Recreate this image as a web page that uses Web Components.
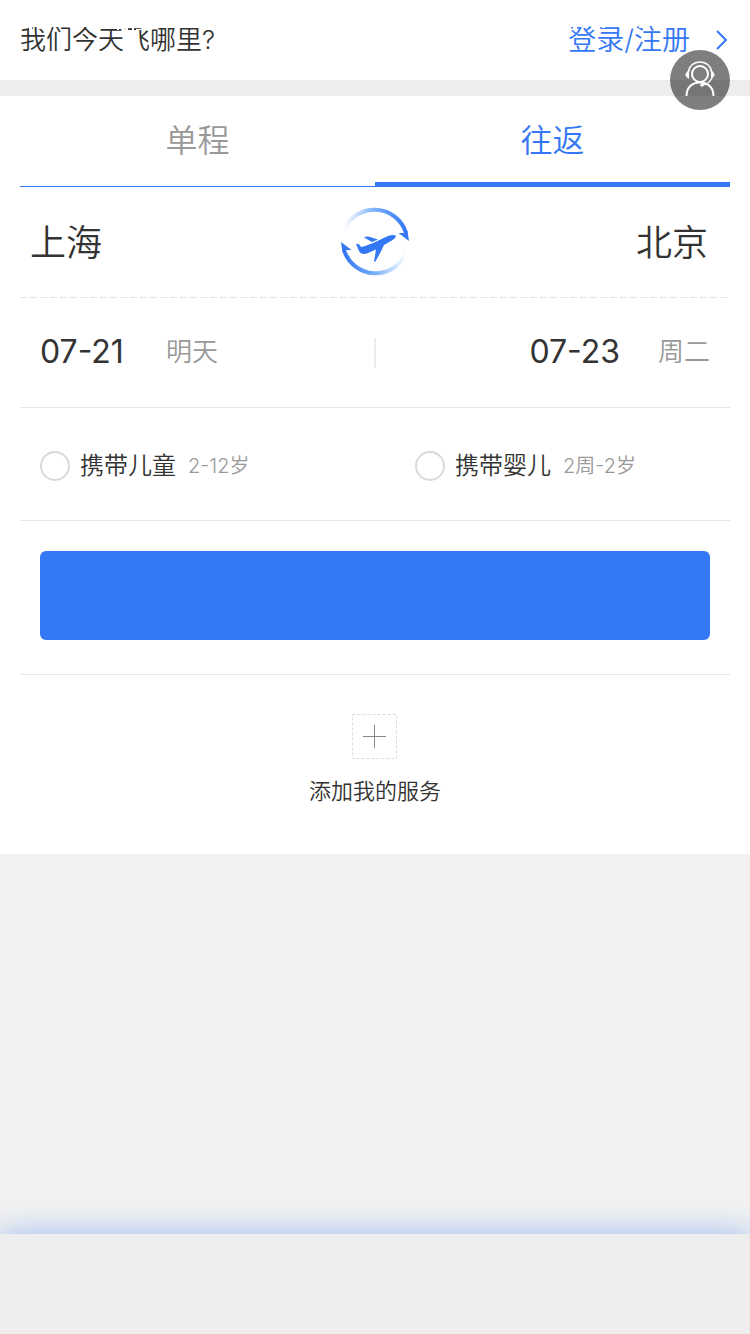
<!DOCTYPE html>
<html lang="zh-CN">
<head>
<meta charset="utf-8">
<meta name="viewport" content="width=device-width, initial-scale=1">
<title>机票预订</title>
<style>
  html, body {
    height: 100%;
  }
  body {
    margin: 0;
    font-family: Inter, "Noto Sans CJK SC", sans-serif;
    font-weight: 350;
    color: #333;
    background: #f1f1f1;
    --blue: #3478f6;
    --line: #e6e6e6;
    --grey: #999;
  }
</style>
</head>
<body>
<flight-app>
  <welcome-bar slot="top" title-text="我们今天飞哪里?" link-text="登录/注册"></welcome-bar>
  <trip-tabs tabs="单程,往返" selected="1"></trip-tabs>
  <city-row from="上海" to="北京"></city-row>
  <date-row>
    <trip-date date="07-21" day="明天"></trip-date>
    <trip-date date="07-23" day="周二"></trip-date>
  </date-row>
  <passenger-row>
    <check-option hint="2-12岁">携带儿童</check-option>
    <check-option hint="2周-2岁">携带婴儿</check-option>
  </passenger-row>
  <search-action></search-action>
  <add-service>添加我的服务</add-service>
</flight-app>

<script>
// small helper, every element here gets an open shadow root filled with markup
class BaseElement extends HTMLElement {
  constructor() {
    super()
    this.attachShadow({ mode: "open" })
  }
  connectedCallback() {
    this.shadowRoot.innerHTML = `<style>
      :host { display: block; }
      button { font: inherit; color: inherit; background: none; border: 0; padding: 0; margin: 0; cursor: pointer; }
      svg { display: block; }
    </style>${this.render()}`
  }
}

// page frame: top slot, white card, empty area and the bottom bar
class FlightApp extends BaseElement {
  render() {
    return `
    <style>
      :host { display: flex; flex-direction: column; min-height: 100%; }
      main { background: #fff; padding: 0 20px; }
      .rest { flex: 1; overflow: hidden; display: flex; flex-direction: column; justify-content: flex-end; }
      footer { height: 100px; background: #eee; box-shadow: 0 0 28px rgba(52, 124, 246, 0.46); }
    </style>
    <slot name="top"></slot>
    <main><slot></slot></main>
    <div class="rest"><footer></footer></div>`
  }
}

class WelcomeBar extends BaseElement {
  render() {
    return `
    <style>
      :host { position: relative; border-bottom: 16px solid #ededed; }
      header { display: flex; align-items: center; justify-content: space-between; height: 80px; padding: 0 20px; background: #fff; }
      h1 { margin: 0; font-size: 26px; line-height: 40px; font-weight: inherit; }
      a { display: flex; align-items: center; gap: 26px; padding-right: 2px; font-size: 28px; line-height: 40px; color: var(--blue); text-decoration: none; }
      .status { position: absolute; top: 0; left: 0; width: 100%; height: 30px; display: flex; justify-content: space-between; pointer-events: none; }
      button { position: absolute; right: 20px; top: 50px; width: 60px; height: 60px; border-radius: 50%; background: rgba(0, 0, 0, 0.5); }
    </style>
    <header>
      <h1>${this.getAttribute("title-text")}</h1>
      <a href="#login">${this.getAttribute("link-text")}
        <svg width="12" height="20" viewBox="0 0 12 20" fill="none" stroke="currentColor" stroke-width="2"><path d="M1 1l9 9-9 9"/></svg>
      </a>
    </header>
    <!-- white status area lies over the top edge of the texts -->
    <div class="status" aria-hidden="true">
      <svg width="220" height="30" viewBox="0 0 220 30" fill="#fff">
        <path d="M0 0H220V27H0Z"/>
        <path d="M29 26h3v4h-3zM37 26h4v3h-4zM108 26h3v3h-3zM117 26h2v4h-2zM126 26h2v4h-2zM132 26h2v4h-2zM136 29h5v1h-5z"/>
      </svg>
      <svg width="220" height="30" viewBox="0 0 220 30" fill="#fff">
        <path d="M0 0H220V26H0Z"/>
        <path d="M43 25h4v4h-4zM53 25h2v3h-2zM72 25h3v3h-3zM109 25h3v3h-3zM122 25h2v3h-2z"/>
      </svg>
    </div>
    <button aria-label="客服">
      <svg width="60" height="60" viewBox="0 0 60 60" fill="none" stroke="#fff">
        <circle cx="30" cy="24" r="8" stroke-width="2"/>
        <path d="M18.500 22a11.500 10 0 0 1 23 0M42 28c-2 4-5 6.500-10 7" stroke-width="1.400"/>
        <path d="M19 20q-7 4.500 0 9zM41 20q7 4.500 0 9z" fill="#fff" stroke="none"/>
        <circle cx="32" cy="35" r="1.800" fill="#fff" stroke="none"/>
        <path d="M16.500 46c0-8 5-13.500 13.500-13.500s13.500 5.500 13.500 13.500" stroke-width="2"/>
      </svg>
    </button>`
  }
}

class TripTabs extends BaseElement {
  render() {
    const selected = Number(this.getAttribute("selected"))
    const tabs = this.getAttribute("tabs").split(",")
    return `
    <style>
      nav { display: flex; align-items: flex-end; }
      button { flex: 1; height: 91px; box-sizing: border-box; padding-bottom: 4px; font-size: 32px; line-height: 48px; color: var(--grey); border-bottom: 1px solid var(--blue); }
      button[aria-selected="true"] { padding-bottom: 0; color: var(--blue); border-bottom-width: 5px; }
      span { display: block; padding-top: 4px; }
    </style>
    <nav role="tablist">
      ${tabs.map((tab, i) => `<button role="tab" aria-selected="${i === selected}"><span>${tab}</span></button>`).join("")}
    </nav>`
  }
}

class CityRow extends BaseElement {
  render() {
    return `
    <style>
      .row { display: grid; grid-template-columns: 1fr auto 1fr; align-items: center; height: 110px; }
      .city { justify-self: start; padding: 2px 10px 0; font-size: 36px; line-height: 54px; }
      .to { justify-self: end; padding-right: 22px; }
      .dash { height: 1px; background: repeating-linear-gradient(90deg, #e2e2e2 0 7px, transparent 7px 10px); }
    </style>
    <div class="row">
      <button class="city">${this.getAttribute("from")}</button>
      <button aria-label="交换城市">
        <svg width="72" height="72" viewBox="0 0 72 72">
          <defs>
            <linearGradient id="fade" x1="0" x2="1" y1="0" y2="0"><stop offset="0" stop-color="#fff"/><stop offset=".5" stop-color="#78b0fb"/><stop offset="1" stop-color="#3478f6"/></linearGradient>
            <g id="arrow">
              <path d="M5 24A33 33 0 0 1 67 27" fill="none" stroke="url(#fade)" stroke-width="4"/>
              <path d="M70 35L59.500 27L65 27L68.500 25Z" fill="#3478f6"/>
            </g>
          </defs>
          <use href="#arrow"/>
          <use href="#arrow" transform="rotate(180 36 35.500)"/>
          <path d="M17 38Q20 37 22 41L26 40L34 37L49 30Q55 28 57 30Q57 32 52 35L45 39Q41 48 36 56L35 55.500L37 43.500L28 47.500Q22 49 20 45Z" fill="#3478f6"/>
          <path d="M25 31.500Q28 30 31 31L39 33.500L33 36Z" fill="#3478f6"/>
        </svg>
      </button>
      <button class="city to">${this.getAttribute("to")}</button>
    </div>
    <div class="dash"></div>`
  }
}

class DateRow extends BaseElement {
  render() {
    return `
    <style>
      .row { display: flex; align-items: center; justify-content: space-between; height: 109px; padding: 0 20px; border-bottom: 1px solid var(--line); }
      .split { width: 2px; height: 30px; background: #ececec; }
      .half { flex: 1; display: flex; }
      .end { justify-content: flex-end; }
    </style>
    <div class="row">
      <div class="half"><slot name="start"></slot></div>
      <div class="split"></div>
      <div class="half end"><slot name="end"></slot></div>
    </div>`
  }
  connectedCallback() {
    super.connectedCallback()
    // first date goes left of the divider, second one right
    const dates = this.querySelectorAll("trip-date")
    dates[0].slot = "start"
    dates[1].slot = "end"
  }
}

class TripDate extends BaseElement {
  render() {
    return `
    <style>
      button { display: flex; align-items: center; gap: 38px; padding-bottom: 2px; line-height: 48px; }
      .date { min-width: 88px; text-align: left; font-size: 32px; font-weight: 400; }
      .day { font-size: 26px; color: var(--grey); }
    </style>
    <button><span class="date">${this.getAttribute("date")}</span><span class="day">${this.getAttribute("day")}</span></button>`
  }
}

class PassengerRow extends BaseElement {
  render() {
    return `
    <style>
      .row { display: grid; grid-template-columns: 1fr 1fr; align-items: center; height: 108px; padding-top: 4px; border-bottom: 1px solid var(--line); }
      ::slotted(*) { padding-left: 20px; }
      ::slotted(:last-child) { padding-left: 40px; }
    </style>
    <div class="row"><slot></slot></div>`
  }
}

class CheckOption extends BaseElement {
  render() {
    return `
    <style>
      label { display: flex; align-items: center; font-size: 24px; line-height: 36px; }
      input { appearance: none; width: 30px; height: 30px; margin: 0 10px 0 0; border: 2px solid #d9d9d9; border-radius: 50%; }
      input:checked { border-color: var(--blue); background: var(--blue); }
      small { margin-left: 12px; font-size: 20px; color: var(--grey); }
    </style>
    <label><input type="checkbox"><span><slot></slot></span><small>${this.getAttribute("hint")}</small></label>`
  }
}

class SearchAction extends BaseElement {
  render() {
    return `
    <style>
      :host { padding: 30px 20px 34px; border-bottom: 1px solid var(--line); }
      button { display: block; width: 100%; height: 89px; border-radius: 6px; background: var(--blue); }
    </style>
    <button aria-label="搜索"></button>`
  }
}

class AddService extends BaseElement {
  render() {
    return `
    <style>
      button { display: flex; flex-direction: column; align-items: center; gap: 14px; margin: 0 auto; padding: 38px 0 46px; font-size: 22px; line-height: 34px; }
    </style>
    <button>
      <svg width="47" height="47" viewBox="0 0 47 47" fill="none">
        <rect x="1.500" y="1.500" width="44" height="44" stroke="#ddd" stroke-dasharray="3 2"/>
        <path d="M12 23.500h23M23.500 12v23" stroke="#888"/>
      </svg>
      <slot></slot>
    </button>`
  }
}

customElements.define("flight-app", FlightApp)
customElements.define("welcome-bar", WelcomeBar)
customElements.define("trip-tabs", TripTabs)
customElements.define("city-row", CityRow)
customElements.define("date-row", DateRow)
customElements.define("trip-date", TripDate)
customElements.define("passenger-row", PassengerRow)
customElements.define("check-option", CheckOption)
customElements.define("search-action", SearchAction)
customElements.define("add-service", AddService)
</script>
</body>
</html>
